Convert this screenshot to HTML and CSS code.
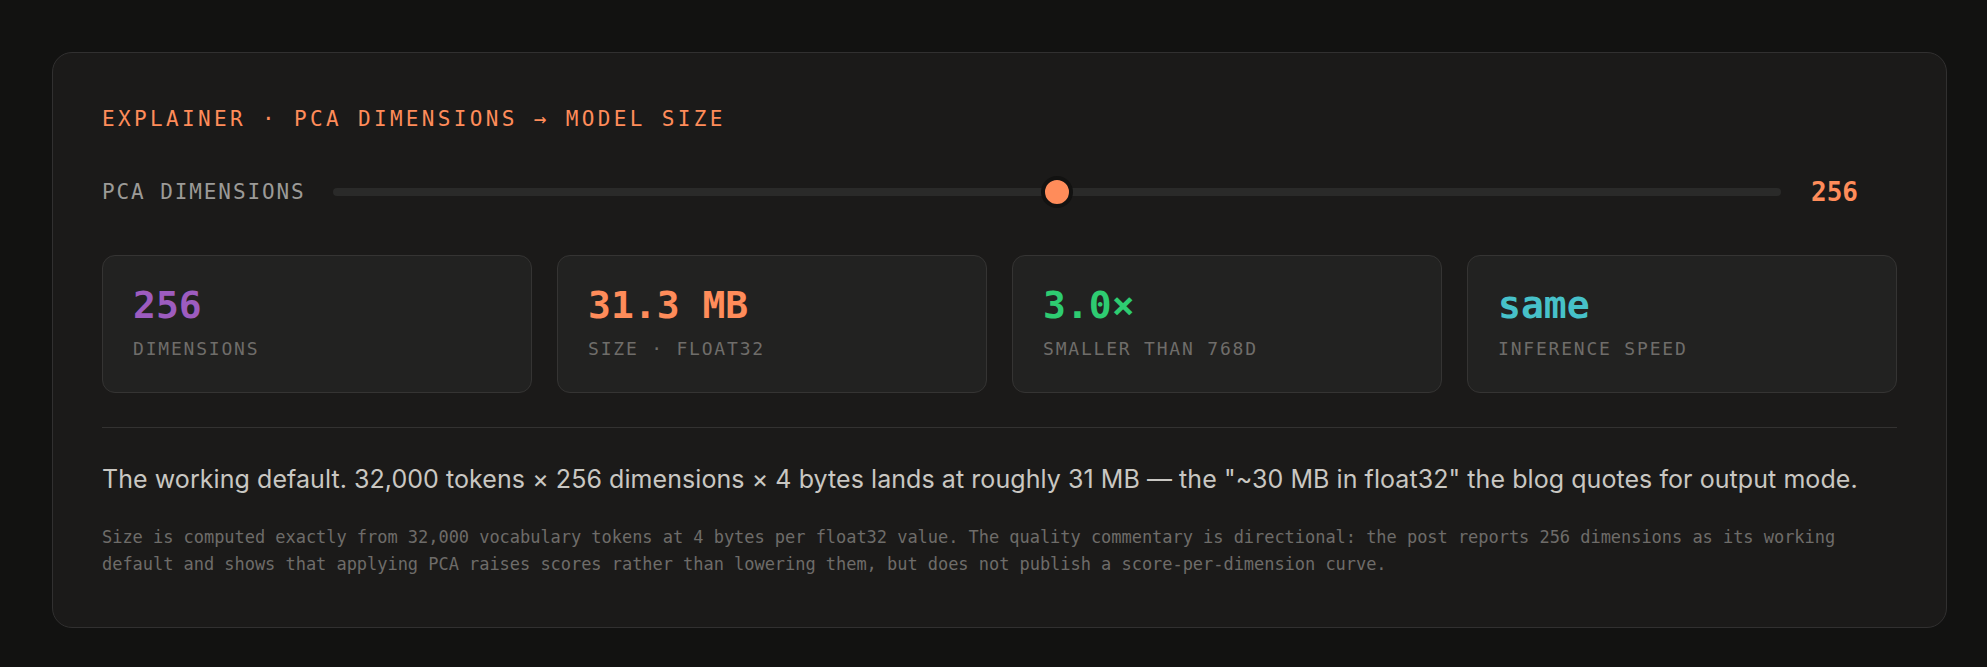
FILE: index.html
```html
<!DOCTYPE html>
<html lang="en">
<head>
<meta charset="utf-8">
<title>Explainer · PCA dimensions → model size</title>
<link rel="stylesheet" href="styles.css">
</head>
<body>
<div class="card">
  <div class="eyebrow">EXPLAINER · PCA DIMENSIONS → MODEL SIZE</div>
  <div class="slider-row">
    <span class="slider-label">PCA DIMENSIONS</span>
    <div class="slider">
      <div class="track"></div>
      <div class="thumb" style="left:50%"></div>
    </div>
    <span class="slider-value">256</span>
  </div>
  <div class="stats">
    <div class="stat">
      <div class="stat-value purple">256</div>
      <div class="stat-label">DIMENSIONS</div>
    </div>
    <div class="stat">
      <div class="stat-value orange">31.3 MB</div>
      <div class="stat-label">SIZE · FLOAT32</div>
    </div>
    <div class="stat">
      <div class="stat-value green">3.0×</div>
      <div class="stat-label">SMALLER THAN 768D</div>
    </div>
    <div class="stat">
      <div class="stat-value teal">same</div>
      <div class="stat-label">INFERENCE SPEED</div>
    </div>
  </div>
  <div class="divider"></div>
  <p class="lead">The working default. 32,000 tokens × 256 dimensions × 4 bytes lands at roughly 31 MB — the &quot;~30 MB in float32&quot; the blog quotes for output mode.</p>
  <p class="note">Size is computed exactly from 32,000 vocabulary tokens at 4 bytes per float32 value. The quality commentary is directional: the post reports 256 dimensions as its working default and shows that applying PCA raises scores rather than lowering them, but does not publish a score-per-dimension curve.</p>
</div>
</body>
</html>
```
FILE: styles.css
```css
* { box-sizing: border-box; }

html, body {
  margin: 0;
  background: #121211;
}

body {
  padding: 52px 40px 40px 52px;
  font-family: "DejaVu Sans Mono", "Liberation Mono", monospace;
}

.card {
  width: 100%;
  background: #1b1a19;
  border: 1px solid #313030;
  border-radius: 20px;
  padding: 54px 49px 50px 49px;
}

.eyebrow {
  font-size: 21px;
  line-height: 24px;
  letter-spacing: 3.35px;
  color: #ff8c5a;
  white-space: nowrap;
}

.slider-row {
  margin-top: 45px;
  height: 32px;
  display: flex;
  align-items: center;
}

.slider-label {
  font-size: 21px;
  line-height: 24px;
  letter-spacing: 1.9px;
  color: #9c9a97;
  white-space: nowrap;
  margin-right: 27px;
}

.slider {
  position: relative;
  flex: 1;
  height: 32px;
  display: flex;
  align-items: center;
}

.track {
  width: 100%;
  height: 8px;
  border-radius: 4px;
  background: #2a2a29;
}

.thumb {
  position: absolute;
  top: 0;
  width: 32px;
  height: 32px;
  margin-left: -16px;
  border-radius: 50%;
  background: #ff8c5a;
  border: 4px solid #121211;
}

.slider-value {
  width: 86px;
  margin-left: 30px;
  font-size: 26px;
  line-height: 32px;
  font-weight: 700;
  color: #ff8c5a;
}

.stats {
  margin-top: 47px;
  display: grid;
  grid-template-columns: repeat(4, 1fr);
  gap: 25px;
}

.stat {
  background: #222221;
  border: 1px solid #353433;
  border-radius: 13px;
  padding: 30px 30px 33px 30px;
}

.stat-value {
  font-size: 38px;
  line-height: 38px;
  font-weight: 700;
  margin-bottom: 15px;
  white-space: nowrap;
}

.stat-label {
  font-size: 18px;
  line-height: 20px;
  letter-spacing: 1.8px;
  color: #6f6d6a;
  white-space: nowrap;
}

.purple { color: #9d5cbf; }
.orange { color: #ff8c5a; }
.green { color: #2ecc71; }
.teal { color: #47c1c9; }

.divider {
  margin-top: 34px;
  height: 1px;
  background: #333231;
}

.lead {
  margin: 33px 0 0 0;
  font-family: Inter, "Liberation Sans", sans-serif;
  font-size: 25px;
  line-height: 36px;
  letter-spacing: 0.065px;
  color: #c9c7c2;
  white-space: nowrap;
}

.note {
  margin: 27px 0 0 0;
  font-size: 17px;
  line-height: 26.6px;
  letter-spacing: -0.04px;
  color: #6e6c69;
}
```
